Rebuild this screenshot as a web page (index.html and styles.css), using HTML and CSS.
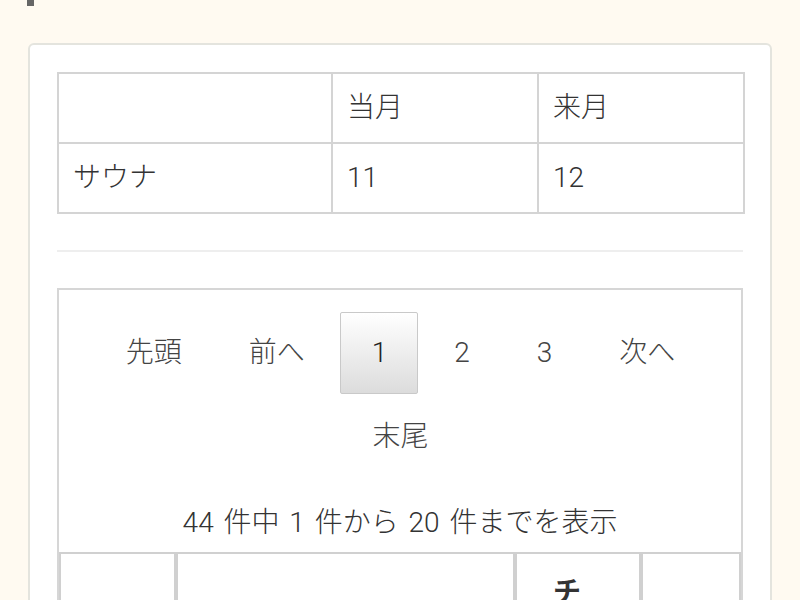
FILE: index.html
```html
<!DOCTYPE html>
<html lang="ja">
<head>
<meta charset="utf-8">
<link rel="stylesheet" href="styles.css">
</head>
<body>
<div class="mark"></div>
<div class="card">
  <table class="summary">
    <colgroup><col class="c1"><col class="c2"><col class="c3"></colgroup>
    <tr><td></td><td>当月</td><td>来月</td></tr>
    <tr><td>サウナ</td><td>11</td><td>12</td></tr>
  </table>
  <hr class="rule">
  <div class="listbox">
    <div class="paging">
      <a class="btn">先頭</a>
      <a class="btn">前へ</a>
      <a class="btn current">1</a>
      <a class="btn">2</a>
      <a class="btn">3</a>
      <a class="btn">次へ</a>
      <a class="btn">末尾</a>
    </div>
    <div class="info">44 件中 1 件から 20 件までを表示</div>
    <table class="list">
      <colgroup><col class="l1"><col class="l2"><col class="l3"><col class="l4"></colgroup>
      <tr><th></th><th></th><th class="wrap">チェックイン</th><th></th></tr>
    </table>
  </div>
</div>
</body>
</html>
```

FILE: styles.css
```css
html, body {
  margin: 0;
  padding: 0;
}
body {
  background: #fffaf1;
  font-family: Roboto, "Noto Sans CJK JP", sans-serif;
  font-weight: 300;
  color: #333;
  font-size: 28px;
  line-height: 42px;
  height: 600px;
  overflow: hidden;
}
.mark {
  width: 7px;
  height: 6px;
  margin-left: 27px;
  background: #666;
}
.card {
  margin: 37px 28px 0;
  background: #fff;
  border: 2px solid #e4e4de;
  border-radius: 6px;
  padding: 27px 27px 40px;
}
.summary {
  width: 100%;
  border-collapse: collapse;
  table-layout: fixed;
}
.summary .c1 { width: 274px; }
.summary .c2 { width: 206px; }
.summary .c3 { width: 206px; }
.summary td {
  border: 2px solid #d4d4d4;
  padding: 13px 14px;
  height: 42px;
}
.rule {
  border: 0;
  border-top: 2px solid #eeeeee;
  margin: 36px 0 36px;
}
.listbox {
  border: 2px solid #d6d6d6;
  padding-top: 22px;
}
.paging {
  display: flex;
  flex-wrap: wrap;
  justify-content: center;
  gap: 2px 4px;
  color: #444;
}
.btn {
  display: block;
  padding: 19px 30px 19px 31px;
  border: 1px solid transparent;
  border-radius: 2px;
  min-width: 15px;
  text-align: center;
}
.btn.current {
  border-color: #c9c9c9;
  background: linear-gradient(#ffffff, #dcdcdc);
  color: #222;
}
.info {
  text-align: center;
  margin-top: 24px;
  margin-bottom: 8px;
  word-spacing: 3px;
}
.list {
  width: 100%;
  border-collapse: separate;
  border-spacing: 0;
  table-layout: fixed;
}
.list .l1 { width: 117px; }
.list .l2 { width: 339px; }
.list .l3 { width: 126px; }
.list .l4 { width: 100px; }
.list th {
  border: 2px solid #d0d0d0;
  border-bottom: 0;
  padding: 18px 36px;
  text-align: left;
  font-weight: bold;
  vertical-align: top;
  height: 60px;
}
```
